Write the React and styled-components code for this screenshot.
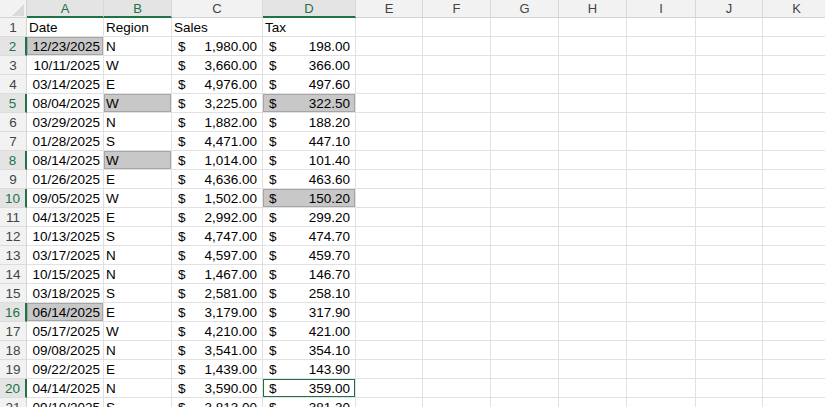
import React from "react";
import styled, { createGlobalStyle, css } from "styled-components";

const GlobalStyle = createGlobalStyle`
  html, body {
    margin: 0;
    padding: 0;
    background: #fff;
    overflow: hidden;
  }
  body {
    font-family: "Liberation Sans", Arial, sans-serif;
  }
`;

const GREEN = "#217346";
const COLS = [77, 68, 91, 93, 67, 68, 68, 68, 69, 67, 68];
const LETTERS = ["A", "B", "C", "D", "E", "F", "G", "H", "I", "J", "K"];

const Sheet = styled.div`
  display: grid;
  grid-template-columns: 27px ${COLS.map((w) => `${w}px`).join(" ")};
  grid-template-rows: 18px;
  grid-auto-rows: 19px;
  width: 831px;
  height: 407px;
  overflow: hidden;
  font-size: 13.5px;
  color: #000;
`;

const Corner = styled.div`
  background: #f2f2f2;
  border-right: 1px solid #d4d4d4;
  border-bottom: 1px solid #d4d4d4;
  display: flex;
  align-items: flex-end;
  justify-content: flex-end;
  padding: 0 2px 1px 0;
  box-sizing: border-box;
`;

const ColHeader = styled.div`
  box-sizing: border-box;
  background: ${(p) => (p.$sel ? "#e4e4e4" : "#f2f2f2")};
  border-right: 1px solid #d8d8d8;
  border-bottom: ${(p) => (p.$sel ? `2px solid ${GREEN}` : "1px solid #d4d4d4")};
  color: ${(p) => (p.$sel ? GREEN : "#444")};
  display: flex;
  align-items: center;
  justify-content: center;
  font-size: 13px;
  padding-top: ${(p) => (p.$sel ? "1px" : "0")};
`;

const RowHeader = styled.div`
  box-sizing: border-box;
  background: ${(p) => (p.$sel ? "#e4e4e4" : "#f2f2f2")};
  border-bottom: 1px solid #dcdcdc;
  border-right: ${(p) => (p.$sel ? `2px solid ${GREEN}` : "1px solid #d4d4d4")};
  color: ${(p) => (p.$sel ? GREEN : "#444")};
  display: flex;
  align-items: center;
  justify-content: center;
  font-size: 13.5px;
`;

const Cell = styled.div`
  box-sizing: border-box;
  border-right: 1px solid #e1e1e1;
  border-bottom: 1px solid #e1e1e1;
  display: flex;
  align-items: center;
  white-space: nowrap;
  overflow: visible;
  padding: 0 3px 0 2px;
  justify-content: ${(p) =>
    p.$align === "right" ? "flex-end" : p.$align === "money" ? "space-between" : "flex-start"};
  ${(p) => p.$align === "money" && css`padding: 0 5px 0 6px;`}
  ${(p) => p.$align === "right" && css`padding: 0 3px 0 2px;`}
  ${(p) =>
    p.$mark === "sel" &&
    css`
      background: #c8c8c8;
      box-shadow: inset 0 0 0 1px #a6a6a6;
    `}
  ${(p) =>
    p.$mark === "active" &&
    css`
      box-shadow: inset 0 0 0 1px ${GREEN};
    `}
`;

const rows = [
  ["12/23/2025", "N", "1,980.00", "198.00"],
  ["10/11/2025", "W", "3,660.00", "366.00"],
  ["03/14/2025", "E", "4,976.00", "497.60"],
  ["08/04/2025", "W", "3,225.00", "322.50"],
  ["03/29/2025", "N", "1,882.00", "188.20"],
  ["01/28/2025", "S", "4,471.00", "447.10"],
  ["08/14/2025", "W", "1,014.00", "101.40"],
  ["01/26/2025", "E", "4,636.00", "463.60"],
  ["09/05/2025", "W", "1,502.00", "150.20"],
  ["04/13/2025", "E", "2,992.00", "299.20"],
  ["10/13/2025", "S", "4,747.00", "474.70"],
  ["03/17/2025", "N", "4,597.00", "459.70"],
  ["10/15/2025", "N", "1,467.00", "146.70"],
  ["03/18/2025", "S", "2,581.00", "258.10"],
  ["06/14/2025", "E", "3,179.00", "317.90"],
  ["05/17/2025", "W", "4,210.00", "421.00"],
  ["09/08/2025", "N", "3,541.00", "354.10"],
  ["09/22/2025", "E", "1,439.00", "143.90"],
  ["04/14/2025", "N", "3,590.00", "359.00"],
  ["09/10/2025", "S", "3,813.00", "381.30"],
];

// selected cells, keyed "row-col" (row = sheet row number)
const marks = {
  "2-0": "sel",
  "5-1": "sel",
  "5-3": "sel",
  "8-1": "sel",
  "10-3": "sel",
  "16-0": "sel",
  "20-3": "active",
};
const selRows = new Set([2, 5, 8, 10, 16, 20]);
const selCols = new Set([0, 1, 3]);

const Money = ({ v }) => (
  <>
    <span>$</span>
    <span>{v}</span>
  </>
);

const App = () => {
  return (
    <>
      <GlobalStyle />
      <Sheet>
        <Corner>
          <svg width="12" height="12" viewBox="0 0 12 12">
            <polygon points="12,0 12,12 0,12" fill="#dadada" />
          </svg>
        </Corner>
        {LETTERS.map((l, i) => (
          <ColHeader key={l} $sel={selCols.has(i)}>
            {l}
          </ColHeader>
        ))}

        <RowHeader>1</RowHeader>
        <Cell>Date</Cell>
        <Cell>Region</Cell>
        <Cell>Sales</Cell>
        <Cell>Tax</Cell>
        {LETTERS.slice(4).map((l) => (
          <Cell key={l} />
        ))}

        {rows.map((r, idx) => {
          const n = idx + 2;
          return (
            <React.Fragment key={n}>
              <RowHeader $sel={selRows.has(n)}>{n}</RowHeader>
              <Cell $align="right" $mark={marks[`${n}-0`]}>
                {r[0]}
              </Cell>
              <Cell $mark={marks[`${n}-1`]}>{r[1]}</Cell>
              <Cell $align="money" $mark={marks[`${n}-2`]}>
                <Money v={r[2]} />
              </Cell>
              <Cell $align="money" $mark={marks[`${n}-3`]}>
                <Money v={r[3]} />
              </Cell>
              {LETTERS.slice(4).map((l) => (
                <Cell key={l} />
              ))}
            </React.Fragment>
          );
        })}
      </Sheet>
    </>
  );
};

export default App;
